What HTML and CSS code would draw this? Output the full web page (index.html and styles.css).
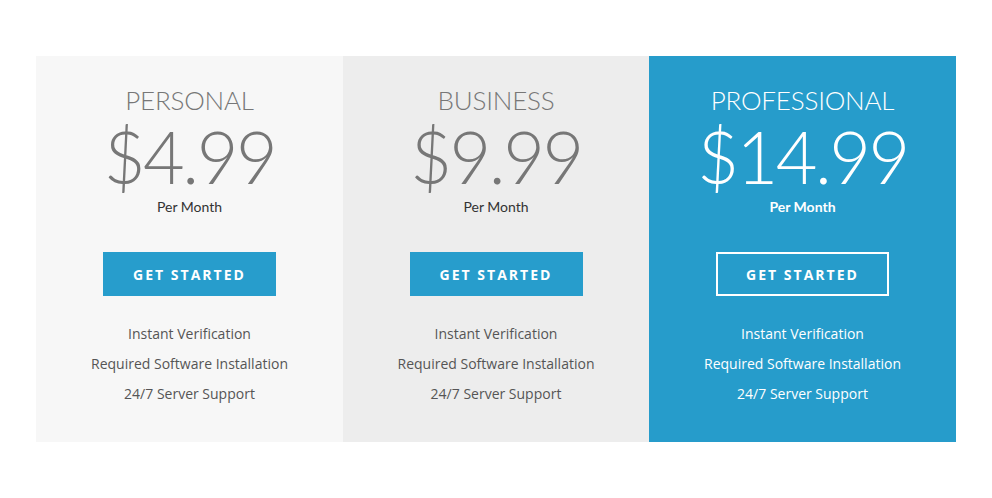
FILE: index.html
```html
<!DOCTYPE html>
<html>
<head>
<meta charset="utf-8">
<link rel="stylesheet" href="styles.css">
</head>
<body>
<div class="pricing">
  <div class="plan plan-personal">
    <h2 class="plan-name">PERSONAL</h2>
    <div class="price">$4.99</div>
    <div class="period">Per Month</div>
    <a class="btn">GET STARTED</a>
    <ul class="features">
      <li>Instant Verification</li>
      <li>Required Software Installation</li>
      <li>24/7 Server Support</li>
    </ul>
  </div>
  <div class="plan plan-business">
    <h2 class="plan-name">BUSINESS</h2>
    <div class="price">$9.99</div>
    <div class="period">Per Month</div>
    <a class="btn">GET STARTED</a>
    <ul class="features">
      <li>Instant Verification</li>
      <li>Required Software Installation</li>
      <li>24/7 Server Support</li>
    </ul>
  </div>
  <div class="plan plan-pro">
    <h2 class="plan-name">PROFESSIONAL</h2>
    <div class="price">$14.99</div>
    <div class="period">Per Month</div>
    <a class="btn btn-outline">GET STARTED</a>
    <ul class="features">
      <li>Instant Verification</li>
      <li>Required Software Installation</li>
      <li>24/7 Server Support</li>
    </ul>
  </div>
</div>
</body>
</html>
```
FILE: styles.css
```css
html, body { margin: 0; padding: 0; background: #fff; }
body { font-family: "Open Sans", "Liberation Sans", sans-serif; }
.pricing {
  width: 920px;
  margin: 56px auto 0;
  display: grid;
  grid-template-columns: 307px 306px 307px;
}
.plan {
  display: flex;
  flex-direction: column;
  align-items: center;
  padding: 27px 0 33px;
  color: #777;
}
.plan-personal { background: #f7f7f7; }
.plan-business { background: #ededed; }
.plan-pro { background: #269ccb; color: #fff; }
.plan-name {
  margin: 0;
  font-family: "Lato", "Open Sans", sans-serif;
  font-weight: 300;
  font-size: 26px;
  line-height: 34px;
  letter-spacing: -0.2px;
}
.price {
  font-family: "Lato", "Open Sans", sans-serif;
  font-weight: 300;
  font-size: 72px;
  line-height: 78px;
  letter-spacing: -2.5px;
  margin-bottom: 3px;
}
.period {
  font-family: "Lato", "Open Sans", sans-serif;
  font-weight: 400;
  font-size: 14px;
  line-height: 18px;
  color: #333;
}
.plan-pro .period { color: #fff; font-weight: 700; }
.btn {
  margin-top: 36px;
  width: 173px;
  height: 44px;
  box-sizing: border-box;
  display: flex;
  align-items: center;
  justify-content: center;
  background: #279dcc;
  color: #fff;
  font-weight: 700;
  font-size: 14px;
  letter-spacing: 2px;
}
.btn-outline {
  background: transparent;
  border: 2px solid #fff;
}
.features {
  list-style: none;
  margin: 23px 0 0;
  padding: 0;
  text-align: center;
  font-size: 14px;
  line-height: 30px;
  color: #555;
}
.plan-pro .features { color: #fff; }
```
